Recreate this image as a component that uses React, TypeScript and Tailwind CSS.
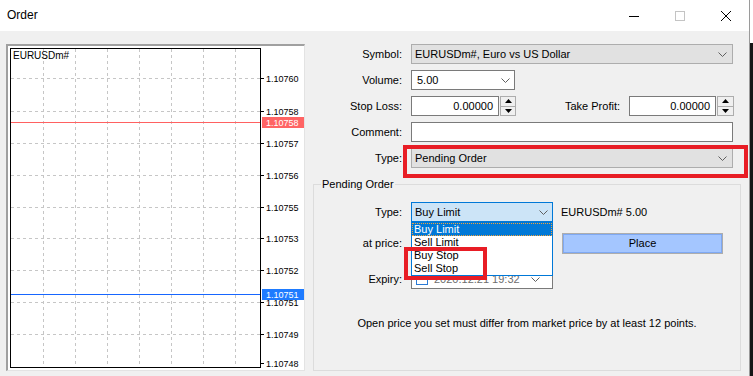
import React from 'react'

const gridY = [78, 111, 143, 175, 207, 238, 270, 302, 334]
const gridX = [43, 75, 107, 139, 171, 203, 235]
const prices: [number, string][] = [
  [78, '1.10760'],
  [111, '1.10758'],
  [143, '1.10757'],
  [175, '1.10756'],
  [207, '1.10755'],
  [238, '1.10753'],
  [270, '1.10752'],
  [302, '1.10751'],
  [334, '1.10749'],
  [363, '1.10748'],
]

function Chevron() {
  return (
    <svg width="9" height="5" viewBox="0 0 9 5" className="shrink-0">
      <polyline points="0.5,0.5 4.5,4.5 8.5,0.5" fill="none" stroke="#5f5f5f" strokeWidth="1" />
    </svg>
  )
}

function Spin({ w }: { w: string }) {
  return (
    <div className={`${w} ml-px flex h-full flex-col border border-[#adadad] bg-[#f0f0f0]`}>
      <div className="flex flex-1 items-center justify-center border-b border-[#adadad]">
        <svg width="7" height="4" viewBox="0 0 7 4"><polygon points="3.5,0 7,4 0,4" fill="#000" /></svg>
      </div>
      <div className="flex flex-1 items-center justify-center">
        <svg width="7" height="4" viewBox="0 0 7 4"><polygon points="0,0 7,0 3.5,4" fill="#000" /></svg>
      </div>
    </div>
  )
}

function Row({ label, narrow, children }: { label: string; narrow?: boolean; children: React.ReactNode }) {
  return (
    <div className="flex h-5 items-center">
      <div className={narrow ? 'w-[88px] text-right' : 'w-[97px] text-right'}>{label}</div>
      <div className="ml-[9px] flex h-full items-center">{children}</div>
    </div>
  )
}

function Chart() {
  return (
    <div className="ml-[6px] mt-[13px] h-[327px] w-[299px] border-l-2 border-t-2 border-b border-r border-l-[#a0a0a0] border-t-[#a0a0a0] border-b-[#e3e3e3] border-r-[#e3e3e3] bg-white">
      <svg width="296" height="324" viewBox="8 46 296 324" shapeRendering="crispEdges" className="block font-['Liberation_Sans',Arial,sans-serif]">
        {gridY.map((y) => (
          <line key={'h' + y} x1={11} x2={260} y1={y + 0.5} y2={y + 0.5} stroke="#c6c6c6" strokeDasharray="3 3" />
        ))}
        {gridX.map((x) => (
          <line key={'v' + x} x1={x + 0.5} x2={x + 0.5} y1={49} y2={367} stroke="#c6c6c6" strokeDasharray="3 3" />
        ))}
        <rect x={10.5} y={48.5} width={250} height={319} fill="none" stroke="#000" />
        {prices.map(([y, p]) => (
          <g key={p}>
            <line x1={261} x2={264} y1={y + 0.5} y2={y + 0.5} stroke="#000" />
            <text x={266} y={y + 3.5} fontSize="9" fill="#000" shapeRendering="auto">{p}</text>
          </g>
        ))}
        <line x1={11} x2={260} y1={122.5} y2={122.5} stroke="#ff6161" />
        <rect x={262} y={117} width={42} height={11} fill="#ff6464" />
        <text x={266} y={125.5} fontSize="9" fill="#fff" shapeRendering="auto">1.10758</text>
        <line x1={11} x2={260} y1={294.5} y2={294.5} stroke="#1766ff" />
        <rect x={262} y={289} width={42} height={11} fill="#1e7bff" />
        <text x={266} y={297.5} fontSize="9" fill="#fff" shapeRendering="auto">1.10751</text>
        <text x={13} y={59} fontSize="10" fill="#000" shapeRendering="auto">EURUSDm#</text>
      </svg>
    </div>
  )
}

export default function App() {
  return (
    <div className="flex h-[376px] w-[753px] overflow-hidden bg-[#f0f0f0] font-['Liberation_Sans',Arial,sans-serif] text-[11px] leading-[13px] text-black">
      <div className="flex h-full w-[750px] flex-col border-r border-[#9a9a9a]">
        <div className="flex h-[31px] shrink-0 items-center bg-white">
          <div className="pl-[7px] text-[12px]">Order</div>
          <div className="ml-auto flex h-full">
            <div className="flex w-[46px] items-center justify-center">
              <svg width="10" height="10" viewBox="0 0 10 10"><line x1="0" x2="10" y1="5.5" y2="5.5" stroke="#000" /></svg>
            </div>
            <div className="flex w-[46px] items-center justify-center">
              <svg width="10" height="10" viewBox="0 0 10 10"><rect x="0.5" y="0.5" width="9" height="9" fill="none" stroke="#c4c4c4" /></svg>
            </div>
            <div className="flex w-[46px] items-center justify-center">
              <svg width="10" height="10" viewBox="0 0 10 10"><path d="M0 0 L10 10 M10 0 L0 10" stroke="#000" strokeWidth="1" /></svg>
            </div>
          </div>
        </div>

        <div className="flex flex-1">
          <Chart />

          <div className="flex flex-1 flex-col pt-[13px]">
            <Row label="Symbol:">
              <div className="flex h-full w-[322px] items-center justify-between border border-[#adadad] bg-[#e1e1e1] pl-[3px] pr-[5px]">
                <span>EURUSDm#, Euro vs US Dollar</span>
                <Chevron />
              </div>
            </Row>
            <div className="mt-[6px]">
              <Row label="Volume:">
                <div className="flex h-full w-[104px] items-center justify-between border border-[#7a7a7a] bg-white pl-[5px] pr-[4px]">
                  <span>5.00</span>
                  <Chevron />
                </div>
              </Row>
            </div>
            <div className="mt-[6px]">
              <Row label="Stop Loss:">
                <div className="flex h-full w-[88px] items-center justify-end border border-[#7a7a7a] bg-white pr-[5px]">0.00000</div>
                <Spin w="w-[16px]" />
                <div className="w-[104px] text-right">Take Profit:</div>
                <div className="ml-[9px] flex h-full w-[87px] items-center justify-end border border-[#7a7a7a] bg-white pr-[5px]">0.00000</div>
                <Spin w="w-[17px]" />
              </Row>
            </div>
            <div className="mt-[6px]">
              <Row label="Comment:">
                <div className="h-full w-[322px] border border-[#7a7a7a] bg-white" />
              </Row>
            </div>
            <div className="mt-[6px]">
              <Row label="Type:">
                <div className="relative flex h-full w-[322px] items-center justify-between border border-[#adadad] bg-[#e1e1e1] pl-[3px] pr-[5px]">
                  <span>Pending Order</span>
                  <Chevron />
                  <div className="absolute left-[-9px] top-[-4px] h-[33px] w-[345px] border-4 border-[#e81d25]" />
                </div>
              </Row>
            </div>

            <fieldset className="ml-[8px] mt-[9px] h-[194px] w-[428px] border border-[#dcdcdc]">
              <legend className="ml-[7px] px-px leading-[14px]">Pending Order</legend>
              <div className="mt-[11px]">
                <Row label="Type:" narrow>
                  <div className="relative flex h-full w-[142px] items-center justify-between border border-[#0078d7] bg-[#cce4f7] pl-[3px] pr-[4px]">
                    <span>Buy Limit</span>
                    <Chevron />
                    <div className="absolute left-[-1px] top-[19px] z-10 flex w-[142px] flex-col border border-[#0078d7] bg-white">
                      <div className="h-[13px] border border-dotted border-[#f0a23c] bg-[#0078d7] pl-px leading-[11px] text-white">Buy Limit</div>
                      <div className="h-[13px] pl-[2px]">Sell Limit</div>
                      <div className="h-[13px] pl-[2px]">Buy Stop</div>
                      <div className="h-[13px] pl-[2px]">Sell Stop</div>
                      <div className="absolute left-[-8px] top-[24px] z-20 h-[33px] w-[83px] border-4 border-[#e81d25]" />
                    </div>
                  </div>
                  <span className="ml-[8px]">EURUSDm# 5.00</span>
                </Row>
              </div>
              <div className="mt-[11px] flex h-[21px] items-center">
                <div className="w-[88px] text-right">at price:</div>
                <div className="ml-[9px] h-[20px] w-[142px] border border-[#7a7a7a] bg-white" />
                <div className="ml-[9px] flex h-full w-[161px] items-center justify-center border border-[#adadad] bg-[#a4c6ff] shadow-[inset_0_0_0_1px_#7fa9f3]">Place</div>
              </div>
              <div className="mt-[15px]">
                <Row label="Expiry:" narrow>
                  <div className="flex h-full w-[142px] items-center border border-[#7a7a7a] bg-white pl-[4px] pr-[12px]">
                    <div className="h-[12px] w-[12px] border border-[#2a7ad5] bg-white" />
                    <span className="ml-[6px] text-[#6d6d6d]">2020.12.21 19:32</span>
                    <div className="ml-auto"><Chevron /></div>
                  </div>
                </Row>
              </div>
              <div className="mt-[28px] text-center">Open price you set must differ from market price by at least 12 points.</div>
            </fieldset>
          </div>
        </div>
      </div>
      <div className="flex w-[3px] flex-col">
        <div className="h-[43px] bg-white" />
        <div className="flex-1 bg-[#161616]" />
      </div>
    </div>
  )
}
